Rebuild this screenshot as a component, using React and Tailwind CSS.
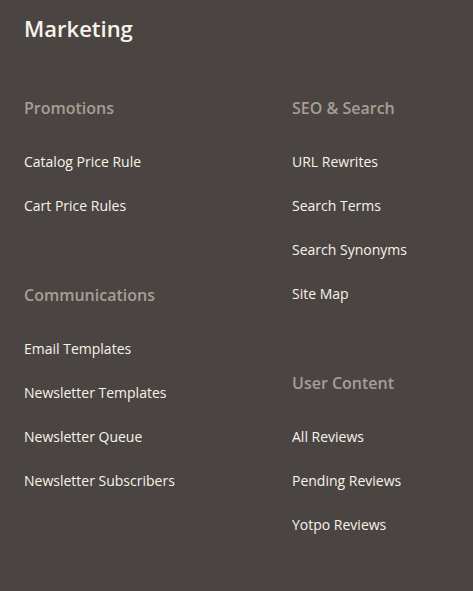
export default function App() {
  const font = { fontFamily: '"Open Sans", "Noto Sans", sans-serif' };
  const Group = ({ title, items, first }) => (
    <div className={first ? "" : "mt-[56px]"}>
      <div className="h-[22px] leading-[22px] text-[16px] font-semibold text-[#a79d95]">{title}</div>
      <ul className="mt-[21px]">
        {items.map((i) => (
          <li key={i} className="h-[44px] leading-[44px] text-[14px] text-[#f7f3eb]">
            <a href="#" className="text-[#f7f3eb]">{i}</a>
          </li>
        ))}
      </ul>
    </div>
  );
  return (
    <div className="min-h-[591px] w-full bg-[#4a4542] px-[24px] pt-[14px]" style={font}>
      <h2 className="text-[22px] leading-[28px] font-semibold text-[#f7f3eb]">Marketing</h2>
      <div className="grid grid-cols-[268px_1fr] mt-[55px]">
        <div>
          <Group first title="Promotions" items={["Catalog Price Rule", "Cart Price Rules"]} />
          <Group title="Communications" items={["Email Templates", "Newsletter Templates", "Newsletter Queue", "Newsletter Subscribers"]} />
        </div>
        <div>
          <Group first title="SEO & Search" items={["URL Rewrites", "Search Terms", "Search Synonyms", "Site Map"]} />
          <Group title="User Content" items={["All Reviews", "Pending Reviews", "Yotpo Reviews"]} />
        </div>
      </div>
    </div>
  );
}
